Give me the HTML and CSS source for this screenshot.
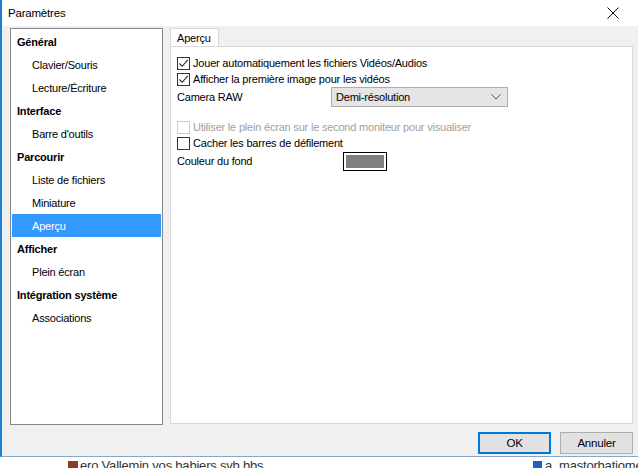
FILE: index.html
```html
<!DOCTYPE html>
<html>
<head>
<meta charset="utf-8">
<link rel="stylesheet" href="styles.css">
</head>
<body>
<div class="screen">
  <div class="dialog">
    <div class="titlebar">
      <span class="title">Paramètres</span>
      <svg class="close" width="12" height="12" viewBox="0 0 12 12"><path d="M0.5 0.5 L11.5 11.5 M11.5 0.5 L0.5 11.5" stroke="#111" stroke-width="1" fill="none"/></svg>
    </div>
    <div class="body">
      <div class="main">
        <div class="tree">
          <div class="node cat">Général</div>
          <div class="node sub">Clavier/Souris</div>
          <div class="node sub">Lecture/Écriture</div>
          <div class="node cat">Interface</div>
          <div class="node sub">Barre d'outils</div>
          <div class="node cat">Parcourir</div>
          <div class="node sub">Liste de fichiers</div>
          <div class="node sub">Miniature</div>
          <div class="node sub selected">Aperçu</div>
          <div class="node cat">Afficher</div>
          <div class="node sub">Plein écran</div>
          <div class="node cat">Intégration système</div>
          <div class="node sub">Associations</div>
        </div>
        <div class="tabs">
          <div class="tabstrip"><div class="tab">Aperçu</div></div>
          <div class="panel">
            <div class="check"><span class="box"><svg width="11" height="11" viewBox="0 0 11 11"><path d="M1.5 5.5 L4.2 8.3 L9.8 1.8" stroke="#222" stroke-width="1.1" fill="none"/></svg></span><span>Jouer automatiquement les fichiers Vidéos/Audios</span></div>
            <div class="check"><span class="box"><svg width="11" height="11" viewBox="0 0 11 11"><path d="M1.5 5.5 L4.2 8.3 L9.8 1.8" stroke="#222" stroke-width="1.1" fill="none"/></svg></span><span>Afficher la première image pour les vidéos</span></div>
            <div class="field raw">
              <span class="label">Camera RAW</span>
              <div class="select"><span>Demi-résolution</span><svg width="10" height="6" viewBox="0 0 10 6"><path d="M0.5 0.5 L5 5 L9.5 0.5" stroke="#555" stroke-width="1" fill="none"/></svg></div>
            </div>
            <div class="check disabled gap"><span class="box"></span><span>Utiliser le plein écran sur le second moniteur pour visualiser</span></div>
            <div class="check"><span class="box"></span><span>Cacher les barres de défilement</span></div>
            <div class="field color">
              <span class="label">Couleur du fond</span>
              <div class="swatch"><div class="swatch-fill"></div></div>
            </div>
          </div>
        </div>
      </div>
      <div class="buttons">
        <div class="btn default">OK</div>
        <div class="btn">Annuler</div>
      </div>
    </div>
  </div>
  <div class="behind">
    <span class="file1"><span class="ico"></span>ero Vallemin vos babiers svb.bbs</span>
    <span class="file2"><span class="ico2"></span>a_mastorbatiome</span>
  </div>
</div>
</body>
</html>
```
FILE: styles.css
```css
html, body { margin: 0; padding: 0; }
body {
  width: 638px; height: 468px; overflow: hidden;
  font-family: "Liberation Sans", Arial, sans-serif;
  font-size: 11px; letter-spacing: -0.2px; color: #000; background: #fff;
}
.screen { width: 638px; height: 468px; display: flex; flex-direction: column; overflow: hidden; }
.dialog {
  height: 457px; flex: none;
  border-left: 2px solid #1c7fd4;
  border-bottom: 1px solid #8aa6c4;
  background: #f0f0f0;
  display: flex; flex-direction: column;
  box-sizing: border-box;
}
.titlebar {
  height: 26px; flex: none; background: #fff;
  display: flex; align-items: center; justify-content: space-between;
  padding: 0 19px 0 6px;
}
.title { font-size: 11.5px; }
.close { display: block; }
.body { flex: 1; display: flex; flex-direction: column; padding: 2px 0 0 8px; }
.main { display: flex; gap: 7px; height: 396px; }
.tree {
  width: 151px; height: 394px; flex: none;
  background: #fff; border: 1px solid #828790;
  padding-top: 1px; box-sizing: content-box;
}
.node { height: 23px; line-height: 24px; white-space: nowrap; margin-right: 1px; margin-left: 1px; }
.cat { font-weight: bold; padding-left: 5px; }
.sub { padding-left: 20px; }
.selected { background: #3399ff; color: #fff; }
.tabs { width: 463px; display: flex; flex-direction: column; }
.tabstrip { height: 18px; display: flex; }
.tab {
  background: #fff; border: 1px solid #d9d9d9; border-bottom: none;
  padding: 0 6px; line-height: 19px; width: 35px;
}
.panel {
  flex: 1; background: #fff; border: 1px solid #d9d9d9;
  padding: 8px 0 0 6px; display: flex; flex-direction: column;
}
.check { display: flex; align-items: center; height: 16px; white-space: nowrap; }
.box {
  width: 11px; height: 11px; border: 1px solid #333; background: #fff;
  margin-right: 3px; display: flex; flex: none;
}
.disabled { color: #a0a0a0; }
.disabled .box { border-color: #cccccc; }
.field { display: flex; align-items: center; }
.label { width: 154px; }
.raw { height: 20px; }
.select {
  width: 177px; height: 20px; box-sizing: border-box;
  background: #e5e5e5; border: 1px solid #adadad;
  display: flex; align-items: center; justify-content: space-between;
  padding: 0 6px 0 4px;
}
.gap { margin-top: 12px; }
.color { height: 20px; }
.color .label { width: 166px; }
.swatch {
  width: 44px; height: 19px; box-sizing: border-box;
  border: 1px solid #000; padding: 2px; background: #fff;
}
.swatch-fill { width: 100%; height: 100%; background: #808080; }
.buttons { display: flex; justify-content: flex-end; gap: 9px; padding: 8px 5px 0 0; }
.btn {
  width: 73px; height: 22px; box-sizing: border-box;
  background: #e1e1e1; border: 1px solid #adadad;
  display: flex; align-items: center; justify-content: center;
  font-size: 11.5px;
}
.btn.default { border: 2px solid #0078d7; }
.behind {
  flex: 1; position: relative; background: #fff; overflow: hidden;
  font-size: 13px; color: #333;
}
.file1 { position: absolute; left: 68px; top: 1px; display: flex; align-items: center; gap: 2px; }
.file2 { position: absolute; left: 533px; top: 1px; display: flex; align-items: center; gap: 3px; }
.ico { width: 10px; height: 10px; background: #8a3c2a; display: inline-block; }
.ico2 { width: 9px; height: 10px; background: #1f5fbf; display: inline-block; }
```
